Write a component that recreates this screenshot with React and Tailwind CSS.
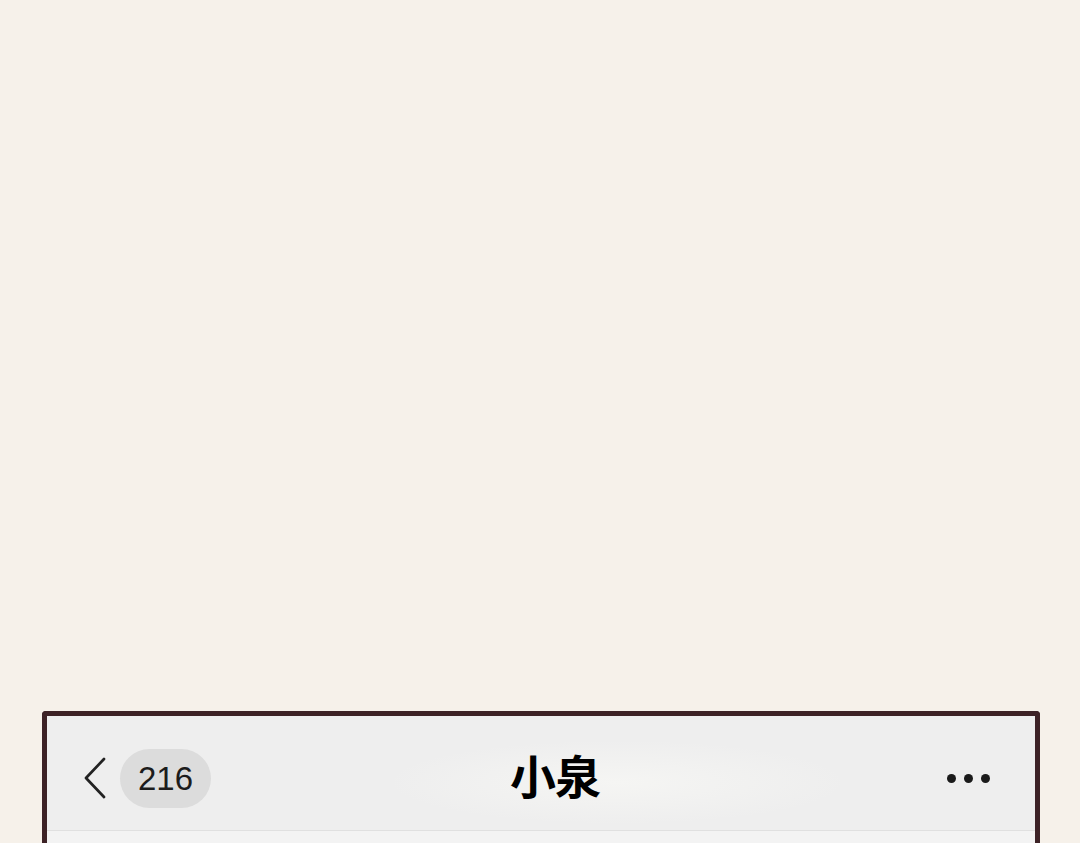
import React from 'react';

// Chat header peeking in at the bottom of a beige page
const BackChevron = () => (
    <svg width="24" height="44" viewBox="0 0 24 44" fill="none">
        <polyline points="21,3 3,22 21,41" stroke="#222" strokeWidth="2.7" strokeLinecap="round" strokeLinejoin="round" />
    </svg>
);

const App = () => {
    return (
        <div className="h-[843px] overflow-hidden bg-[#f6f1ea] flex flex-col" style={{ fontFamily: '"Liberation Sans", "Noto Sans CJK SC", sans-serif' }}>
            <div className="h-[711px] shrink-0" />
            <div className="shrink-0 ml-[42px] w-[998px] border-[5px] border-b-0 border-[#3d2226] rounded-t-[4px] bg-[#eeeeee]">
                <header className="h-[114px] pt-[10px] grid grid-cols-[1fr_auto_1fr] items-center bg-[radial-gradient(ellipse_230px_42px_at_570px_58%,#f5f5f3,transparent)]">
                    <div className="flex items-center pl-[36px]">
                        <BackChevron />
                        <div className="ml-[13px] w-[91px] h-[59px] rounded-full bg-[#dcdcdc] flex items-center justify-center text-[33px] text-[#1c1c1c] mt-[1px]">
                            216
                        </div>
                    </div>
                    <h1 className="pl-[28px] text-[46px] font-bold text-black leading-none tracking-[-1px]">小泉</h1>
                    <div className="flex items-center justify-end gap-[8px] pr-[45px]">
                        <span className="w-[9px] h-[9px] rounded-full bg-[#1a1a1a]" />
                        <span className="w-[9px] h-[9px] rounded-full bg-[#1a1a1a]" />
                        <span className="w-[9px] h-[9px] rounded-full bg-[#1a1a1a]" />
                    </div>
                </header>
                <div className="h-px bg-[#e0e0e0]" />
                <div className="h-[400px] bg-[#f3f3f3]" />
            </div>
        </div>
    );
};

export default App;
